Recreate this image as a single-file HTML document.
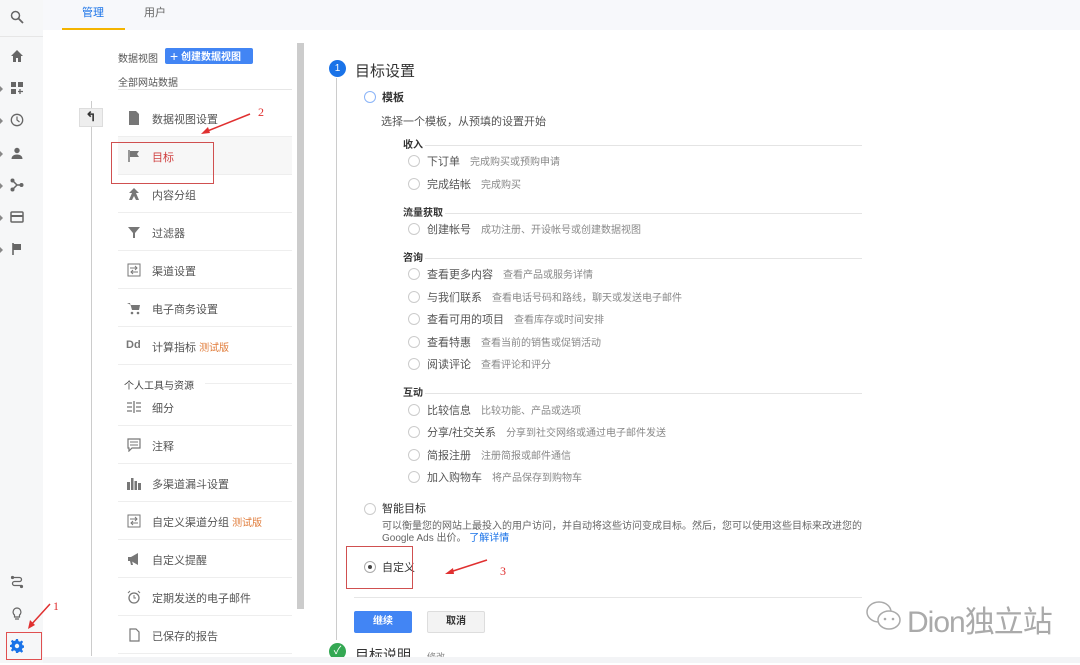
<!DOCTYPE html>
<html><head><meta charset="utf-8"><style>
*{margin:0;padding:0;box-sizing:border-box}
body{width:1080px;height:663px;overflow:hidden;background:#fff;font-family:"Liberation Sans","Noto Sans CJK SC",sans-serif;color:#333;position:relative;font-size:11px}
.a{position:absolute;white-space:nowrap}
.side{left:0;top:0;width:43px;height:663px;background:#f6f7f8}
.top{left:43px;top:0;width:1037px;height:30px;background:#f7f8fb}
.ic{position:absolute;left:10px;width:14px;height:14px;fill:#666}
.row{position:absolute;left:118px;width:174px;height:38px;border-bottom:1px solid #eee}
.lt{position:absolute;left:152px;font-size:11px;color:#555}
.li{position:absolute;left:127px;width:14px;height:14px;fill:#777}
.rad{position:absolute;width:12px;height:12px;border:1px solid #ccc;border-radius:50%;background:#fff}
.opt{position:absolute;font-size:11px;color:#555;white-space:nowrap}
.opt span{color:#888;font-size:10px;margin-left:10px}
.sec{position:absolute;left:403px;font-size:10px;font-weight:bold;color:#333}
.hr{position:absolute;height:1px;background:#e4e4e4}
.beta{color:#e07b39}
</style></head><body>
<div class="a side"></div>
<div class="a" style="left:0;top:36px;width:43px;height:1px;background:#e6e6e6"></div>
<div class="a top"></div>
<div class="a" style="left:82px;top:4px;font-size:11px;color:#1a73e8">管理</div>
<div class="a" style="left:144px;top:4px;font-size:11px;color:#666">用户</div>
<div class="a" style="left:62px;top:28px;width:63px;height:2px;background:#f4b400"></div>
<svg class="ic" style="top:10px" viewBox="0 0 14 14"><circle cx="5.5" cy="5.5" r="4" fill="none" stroke="#666" stroke-width="1.5"/><path d="M8.5 8.5L13 13" stroke="#666" stroke-width="1.8"/></svg>
<svg class="ic" style="top:49px" viewBox="0 0 14 14"><path d="M7 1L1 7h2v6h3V9h2v4h3V7h2z"/></svg>
<svg class="ic" style="top:81px" viewBox="0 0 14 14"><rect x="1" y="1" width="5" height="5"/><rect x="8" y="1" width="5" height="5"/><rect x="1" y="8" width="5" height="5"/><path d="M10 8v5M8 10.5h5" stroke="#666" stroke-width="1.3"/></svg>
<svg class="ic" style="top:113px" viewBox="0 0 14 14"><circle cx="7" cy="7" r="5.7" fill="none" stroke="#666" stroke-width="1.3"/><path d="M7 3.5V7l2.5 2" fill="none" stroke="#666" stroke-width="1.2"/></svg>
<svg class="ic" style="top:146px" viewBox="0 0 14 14"><circle cx="7" cy="4.5" r="2.7"/><path d="M1.5 13c0-3 2.5-4.5 5.5-4.5s5.5 1.5 5.5 4.5z"/></svg>
<svg class="ic" style="top:178px" viewBox="0 0 14 14"><circle cx="2.5" cy="2.5" r="2"/><circle cx="2.5" cy="11.5" r="2"/><circle cx="11.5" cy="7" r="2"/><path d="M2.5 2.5L7 7h4.5M7 7l-4.5 4.5" fill="none" stroke="#666" stroke-width="1.5"/></svg>
<svg class="ic" style="top:210px" viewBox="0 0 14 14"><rect x="1" y="2" width="12" height="10" rx="1" fill="none" stroke="#666" stroke-width="1.5"/><rect x="1" y="5" width="12" height="2"/></svg>
<svg class="ic" style="top:242px" viewBox="0 0 14 14"><path d="M3 1v12" stroke="#666" stroke-width="1.6"/><path d="M3 2h8v6H3z"/></svg>
<div class="a" style="left:0;top:86px;width:0;height:0;border-left:3px solid #888;border-top:3px solid transparent;border-bottom:3px solid transparent"></div>
<div class="a" style="left:0;top:118px;width:0;height:0;border-left:3px solid #888;border-top:3px solid transparent;border-bottom:3px solid transparent"></div>
<div class="a" style="left:0;top:151px;width:0;height:0;border-left:3px solid #888;border-top:3px solid transparent;border-bottom:3px solid transparent"></div>
<div class="a" style="left:0;top:183px;width:0;height:0;border-left:3px solid #888;border-top:3px solid transparent;border-bottom:3px solid transparent"></div>
<div class="a" style="left:0;top:215px;width:0;height:0;border-left:3px solid #888;border-top:3px solid transparent;border-bottom:3px solid transparent"></div>
<div class="a" style="left:0;top:247px;width:0;height:0;border-left:3px solid #888;border-top:3px solid transparent;border-bottom:3px solid transparent"></div>
<svg class="ic" style="top:575px" viewBox="0 0 14 14"><circle cx="2.5" cy="2.5" r="1.6"/><circle cx="11.5" cy="11.5" r="1.6"/><path d="M2.5 2.5h7a2 2 0 010 4h-5a2 2 0 000 4h7" fill="none" stroke="#666" stroke-width="1.3"/></svg>
<svg class="ic" style="top:607px" viewBox="0 0 14 14"><path d="M7 1a4 4 0 00-2.5 7v2h5V8A4 4 0 007 1zM5 12h4" fill="none" stroke="#666" stroke-width="1.2"/></svg>
<svg class="ic" style="top:639px;fill:#1a73e8" viewBox="0 0 14 14"><path d="M6 0h2l.4 2 1.6.7 1.7-1.2 1.4 1.4-1.2 1.7.7 1.6 2 .4v2l-2 .4-.7 1.6 1.2 1.7-1.4 1.4-1.7-1.2-1.6.7L8 14H6l-.4-2-1.6-.7-1.7 1.2-1.400-1.4 1.2-1.7L1.4 8 0 8V6l1.4-.4.7-1.6L.9 2.3 2.3.9 4 2.1l1.6-.7z"/><circle cx="7" cy="7" r="2.2" fill="#f6f7f8"/></svg>
<div class="a" style="left:6px;top:632px;width:36px;height:28px;border:1px solid #e05050"></div>
<svg class="a" style="left:18px;top:598px" width="40" height="36"><path d="M32 6L12 28" stroke="#e03030" stroke-width="1.5"/><path d="M10 31l2-9 5 5z" fill="#e03030"/><text x="35" y="12" font-size="12" fill="#e03030" font-family="Liberation Serif">1</text></svg>
<div class="a" style="left:118px;top:50px;font-size:10px;color:#555">数据视图</div>
<div class="a" style="left:165px;top:48px;width:88px;height:16px;background:#4285f4;border-radius:2px;color:#fff;font-size:10px;font-weight:bold;line-height:16px;padding-left:5px"><span style="font-size:14px;font-weight:normal;vertical-align:-1px">+</span> 创建数据视图</div>
<div class="a" style="left:118px;top:74px;font-size:10px;color:#555">全部网站数据</div>
<div class="a" style="left:118px;top:89px;width:174px;height:1px;background:#e6e6e6"></div>
<div class="a" style="left:91px;top:101px;width:1px;height:555px;background:#ccc"></div>
<div class="a" style="left:79px;top:108px;width:24px;height:19px;background:#eee;border:1px solid #ddd;font-size:13px;text-align:center;line-height:16px;font-weight:bold">↰</div>
<div class="a" style="left:297px;top:43px;width:7px;height:566px;background:#ccc"></div>
<div class="row" style="top:99px"></div>
<div class="row" style="top:137px;background:#f7f7f7"></div>
<div class="row" style="top:175px"></div>
<div class="row" style="top:213px"></div>
<div class="row" style="top:251px"></div>
<div class="row" style="top:289px"></div>
<div class="row" style="top:327px"></div>
<div class="row" style="top:388px"></div>
<div class="row" style="top:426px"></div>
<div class="row" style="top:464px"></div>
<div class="row" style="top:502px"></div>
<div class="row" style="top:540px"></div>
<div class="row" style="top:578px"></div>
<div class="row" style="top:616px"></div>
<div class="a" style="left:205px;top:383px;width:87px;height:1px;background:#eee"></div>
<svg class="li" style="top:111px" viewBox="0 0 14 14"><path d="M2 0h7l3 3v11H2z"/></svg>
<div class="lt" style="top:111px">数据视图设置</div>
<svg class="li" style="top:149px" viewBox="0 0 14 14"><path d="M2 1v12" stroke="#777" stroke-width="1.5"/><path d="M3 2h9l-2 3 2 3H3z"/></svg>
<div class="lt" style="top:149px;color:#d04040">目标</div>
<svg class="li" style="top:187px" viewBox="0 0 14 14"><path d="M7 1L2 6h3l-3 7h3l2-4 2 4h3L9 6h3z"/></svg>
<div class="lt" style="top:187px">内容分组</div>
<svg class="li" style="top:225px" viewBox="0 0 14 14"><path d="M1 2h12L8 8v5H6V8z"/></svg>
<div class="lt" style="top:225px">过滤器</div>
<svg class="li" style="top:263px" viewBox="0 0 14 14"><rect x="1" y="1" width="12" height="12" fill="none" stroke="#777"/><path d="M3 5h7M8 3l2 2-2 2M4 9h7M6 7l-2 2 2 2" fill="none" stroke="#777"/></svg>
<div class="lt" style="top:263px">渠道设置</div>
<svg class="li" style="top:301px" viewBox="0 0 14 14"><path d="M0 2h3l2 7h7l1-5H4"/><circle cx="5" cy="12" r="1.3"/><circle cx="11" cy="12" r="1.3"/></svg>
<div class="lt" style="top:301px">电子商务设置</div>
<div class="a" style="left:126px;top:339px;font-size:11px;font-weight:bold;color:#777">Dd</div>
<div class="lt" style="top:339px">计算指标 <span class="beta" style="font-size:10px">测试版</span></div>
<div class="a" style="left:124px;top:377px;font-size:10px;color:#444">个人工具与资源</div>
<svg class="li" style="top:400px" viewBox="0 0 14 14"><path d="M0 3h5M0 7h5M0 11h5M7 1v12M9 3h5M9 7h5M9 11h5" stroke="#777" stroke-width="1.3"/></svg>
<div class="lt" style="top:400px">细分</div>
<svg class="li" style="top:438px" viewBox="0 0 14 14"><path d="M1 1h12v9H5l-3 3v-3H1z" fill="none" stroke="#777" stroke-width="1.2"/><path d="M3 4h8M3 7h8" stroke="#777"/></svg>
<div class="lt" style="top:438px">注释</div>
<svg class="li" style="top:476px" viewBox="0 0 14 14"><rect x="0" y="6" width="3" height="8"/><rect x="4" y="2" width="2.5" height="12"/><rect x="7.5" y="5" width="2.5" height="9"/><rect x="11" y="7" width="3" height="7"/></svg>
<div class="lt" style="top:476px">多渠道漏斗设置</div>
<svg class="li" style="top:514px" viewBox="0 0 14 14"><rect x="1" y="1" width="12" height="12" fill="none" stroke="#777"/><path d="M3 5h7M8 3l2 2-2 2M4 9h7M6 7l-2 2 2 2" fill="none" stroke="#777"/></svg>
<div class="lt" style="top:514px">自定义渠道分组 <span class="beta" style="font-size:10px">测试版</span></div>
<svg class="li" style="top:552px" viewBox="0 0 14 14"><path d="M1 5h3l7-4v12L4 9H1z"/><path d="M3 9l1 4h2l-1-4"/></svg>
<div class="lt" style="top:552px">自定义提醒</div>
<svg class="li" style="top:590px" viewBox="0 0 14 14"><circle cx="7" cy="8" r="5" fill="none" stroke="#777" stroke-width="1.3"/><path d="M7 5v3h2M1 3l2-2M13 3l-2-2" stroke="#777" fill="none"/></svg>
<div class="lt" style="top:590px">定期发送的电子邮件</div>
<svg class="li" style="top:628px" viewBox="0 0 14 14"><path d="M3 1h6l3 3v9H3z" fill="none" stroke="#777" stroke-width="1.2"/></svg>
<div class="lt" style="top:628px">已保存的报告</div>
<div class="a" style="left:111px;top:142px;width:103px;height:42px;border:1px solid #d05050"></div>
<svg class="a" style="left:195px;top:100px" width="80" height="40"><path d="M55 14L10 32" stroke="#e03030" stroke-width="1.5"/><path d="M6 34l7-7 2 6z" fill="#e03030"/><text x="63" y="16" font-size="12" fill="#e03030" font-family="Liberation Serif">2</text></svg>
<div class="a" style="left:336px;top:78px;width:1px;height:562px;background:#ccc"></div>
<div class="a" style="left:329px;top:60px;width:17px;height:17px;border-radius:50%;background:#1a73e8;color:#fff;font-size:10px;text-align:center;line-height:17px">1</div>
<div class="a" style="left:355px;top:60px;font-size:15px;color:#333">目标设置</div>
<div class="rad" style="left:364px;top:91px;border-color:#8ab4f8"></div>
<div class="a" style="left:382px;top:89px;font-size:11px;font-weight:bold">模板</div>
<div class="a" style="left:381px;top:113px;font-size:11px;color:#555">选择一个模板，从预填的设置开始</div>
<div class="sec" style="top:136px">收入</div><div class="hr" style="left:425px;top:145px;width:437px"></div>
<div class="rad" style="left:408px;top:155px"></div><div class="opt" style="left:427px;top:153px">下订单<span>完成购买或预购申请</span></div>
<div class="rad" style="left:408px;top:178px"></div><div class="opt" style="left:427px;top:176px">完成结帐<span>完成购买</span></div>
<div class="sec" style="top:204px">流量获取</div><div class="hr" style="left:445px;top:213px;width:417px"></div>
<div class="rad" style="left:408px;top:223px"></div><div class="opt" style="left:427px;top:221px">创建帐号<span>成功注册、开设帐号或创建数据视图</span></div>
<div class="sec" style="top:249px">咨询</div><div class="hr" style="left:425px;top:258px;width:437px"></div>
<div class="rad" style="left:408px;top:268px"></div><div class="opt" style="left:427px;top:266px">查看更多内容<span>查看产品或服务详情</span></div>
<div class="rad" style="left:408px;top:291px"></div><div class="opt" style="left:427px;top:289px">与我们联系<span>查看电话号码和路线，聊天或发送电子邮件</span></div>
<div class="rad" style="left:408px;top:313px"></div><div class="opt" style="left:427px;top:311px">查看可用的项目<span>查看库存或时间安排</span></div>
<div class="rad" style="left:408px;top:336px"></div><div class="opt" style="left:427px;top:334px">查看特惠<span>查看当前的销售或促销活动</span></div>
<div class="rad" style="left:408px;top:358px"></div><div class="opt" style="left:427px;top:356px">阅读评论<span>查看评论和评分</span></div>
<div class="sec" style="top:384px">互动</div><div class="hr" style="left:425px;top:393px;width:437px"></div>
<div class="rad" style="left:408px;top:404px"></div><div class="opt" style="left:427px;top:402px">比较信息<span>比较功能、产品或选项</span></div>
<div class="rad" style="left:408px;top:426px"></div><div class="opt" style="left:427px;top:424px">分享/社交关系<span>分享到社交网络或通过电子邮件发送</span></div>
<div class="rad" style="left:408px;top:449px"></div><div class="opt" style="left:427px;top:447px">简报注册<span>注册简报或邮件通信</span></div>
<div class="rad" style="left:408px;top:471px"></div><div class="opt" style="left:427px;top:469px">加入购物车<span>将产品保存到购物车</span></div>
<div class="rad" style="left:364px;top:503px"></div><div class="a" style="left:382px;top:500px;font-size:11px">智能目标</div>
<div class="a" style="left:382px;top:517px;font-size:10px;color:#666">可以衡量您的网站上最投入的用户访问，并自动将这些访问变成目标。然后，您可以使用这些目标来改进您的</div>
<div class="a" style="left:382px;top:529px;font-size:10px;color:#666">Google Ads 出价。 <span style="color:#1a73e8">了解详情</span></div>
<div class="rad" style="left:364px;top:561px;border-color:#aaa"></div><div class="a" style="left:368px;top:565px;width:4px;height:4px;border-radius:50%;background:#444"></div>
<div class="a" style="left:382px;top:559px;font-size:11px">自定义</div>
<div class="a" style="left:346px;top:546px;width:67px;height:43px;border:1px solid #d05050"></div>
<svg class="a" style="left:440px;top:556px" width="80" height="30"><path d="M47 4L10 16" stroke="#e03030" stroke-width="1.5"/><path d="M5 18l8-6 1 6z" fill="#e03030"/><text x="60" y="19" font-size="12" fill="#e03030" font-family="Liberation Serif">3</text></svg>
<div class="a" style="left:354px;top:597px;width:508px;height:1px;background:#e6e6e6"></div>
<div class="a" style="left:354px;top:611px;width:58px;height:22px;background:#4285f4;border-radius:2px;color:#fff;font-size:10px;font-weight:bold;text-align:center;line-height:22px">继续</div>
<div class="a" style="left:427px;top:611px;width:58px;height:22px;background:#f3f3f3;border:1px solid #ddd;border-radius:2px;color:#333;font-size:10px;font-weight:bold;text-align:center;line-height:20px">取消</div>
<div class="a" style="left:329px;top:643px;width:17px;height:17px;border-radius:50%;background:#34a853;color:#fff;font-size:11px;text-align:center;line-height:17px">✓</div>
<div class="a" style="left:355px;top:645px;font-size:14px;color:#333">目标说明</div>
<div class="a" style="left:427px;top:650px;font-size:9px;color:#888">修改</div>
<div class="a" style="left:43px;top:657px;width:1037px;height:6px;background:#f3f4f6"></div>
<svg class="a" style="left:864px;top:598px" width="40" height="36"><ellipse cx="15" cy="14" rx="12" ry="10" fill="none" stroke="#aaa" stroke-width="1.5"/><ellipse cx="25" cy="22" rx="11" ry="9" fill="#fff" stroke="#aaa" stroke-width="1.5"/><circle cx="21" cy="21" r="1.3" fill="#aaa"/><circle cx="29" cy="21" r="1.3" fill="#aaa"/></svg>
<div class="a" style="left:907px;top:597px;font-size:30px;color:#aaa;letter-spacing:-1px">Dion独立站</div>
</body></html>
